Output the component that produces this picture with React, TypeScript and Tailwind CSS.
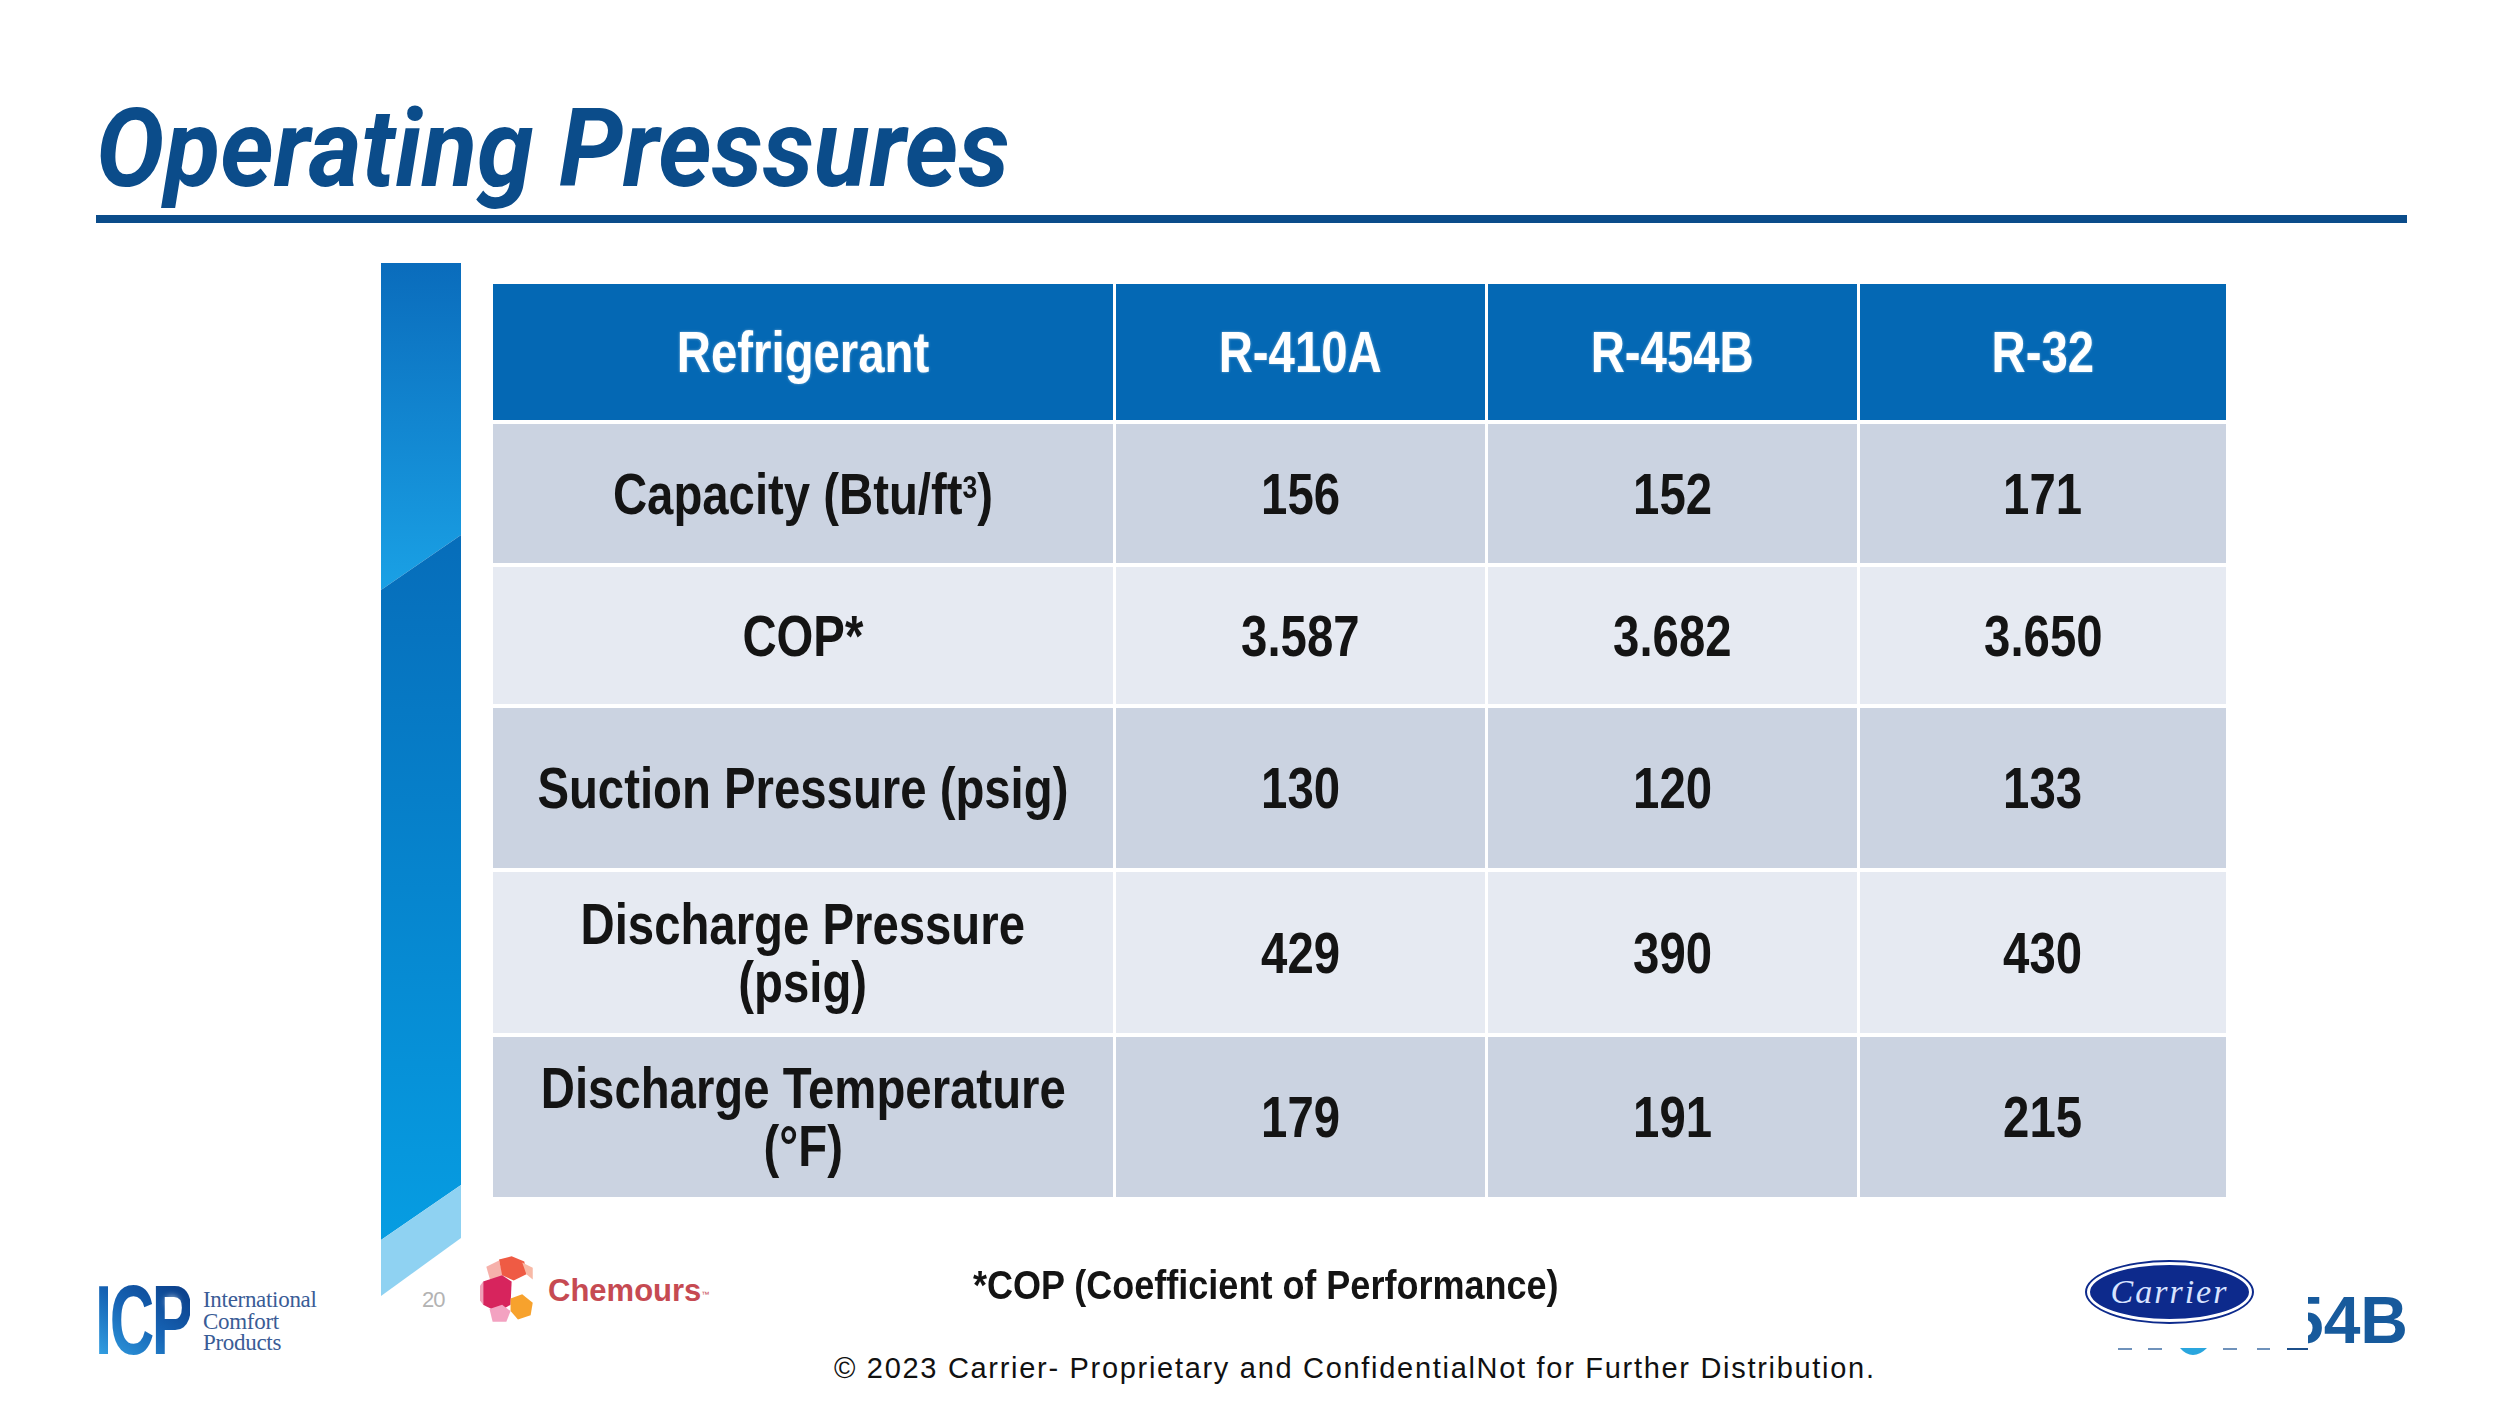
import React from "react";

type Row = {
    label: React.ReactNode;
    values: string[];
    shade: "dark" | "light";
};

const rows: Row[] = [
    { label: <>Capacity (Btu/ft<sup className="text-[32px]">3</sup>)</>, values: ["156", "152", "171"], shade: "dark" },
    { label: "COP*", values: ["3.587", "3.682", "3.650"], shade: "light" },
    { label: "Suction Pressure (psig)", values: ["130", "120", "133"], shade: "dark" },
    { label: <>Discharge Pressure<br />(psig)</>, values: ["429", "390", "430"], shade: "light" },
    { label: <>Discharge Temperature<br />(°F)</>, values: ["179", "191", "215"], shade: "dark" },
];

const headers = ["Refrigerant", "R-410A", "R-454B", "R-32"];

function Cell({ children, className }: { children: React.ReactNode; className: string }) {
    return (
        <div className={"flex items-center justify-center text-center " + className}>
            <span className="inline-block whitespace-nowrap scale-x-[0.83] leading-[58px]">{children}</span>
        </div>
    );
}

function SideBar() {
    return (
        <svg width="80" height="1033" viewBox="0 0 80 1033" className="block">
            <defs>
                <linearGradient id="barTop" x1="0" y1="0" x2="0" y2="1">
                    <stop offset="0" stopColor="#0a6cbc" />
                    <stop offset="1" stopColor="#1aa1e5" />
                </linearGradient>
                <linearGradient id="barMid" x1="0" y1="0" x2="0" y2="1">
                    <stop offset="0" stopColor="#066dba" />
                    <stop offset="1" stopColor="#069de2" />
                </linearGradient>
            </defs>
            <polygon points="0,0 80,0 80,272 0,327" fill="url(#barTop)" />
            <polygon points="0,327 80,272 80,922 0,977" fill="url(#barMid)" />
            <polygon points="0,977 80,922 80,975 0,1033" fill="#8fd2f2" />
        </svg>
    );
}

function IcpLogo() {
    return (
        <div className="flex items-start">
            <div className="relative w-[108px] h-[70px]">
                <span className="inline-block origin-left scale-x-[0.63] text-[98px] leading-[70px] font-bold font-['Liberation_Sans',sans-serif] tracking-[-4px] bg-linear-to-tr from-[#34a2e4] via-[#1663b4] to-[#0b3c86] bg-clip-text text-transparent">
                    ICP
                </span>
                <div className="absolute left-[74px] top-[14px] w-[6px] h-[6px] rounded-full bg-white shadow-[0_0_6px_3px_rgba(255,255,255,0.7)]" />
            </div>
            <div className="mt-[4px] font-['Liberation_Serif',serif] text-[23px] leading-[21.5px] text-[#3a5c96] tracking-[-0.3px]">
                <div>International</div>
                <div>Comfort</div>
                <div>Products</div>
            </div>
        </div>
    );
}

function ChemoursLogo() {
    return (
        <div className="flex items-center">
            <svg width="58" height="68" viewBox="0 0 55 64">
                <polygon points="6,10 18,4 22,18 10,24" fill="#f6b1ab" />
                <polygon points="18,3 30,0 42,5 44,17 32,23 21,18" fill="#ef5b44" />
                <polygon points="40,6 50,11 50,22 44,17" fill="#f8b9a6" />
                <polygon points="3,24 21,18 30,24 29,46 17,53 3,46" fill="#d7245d" />
                <polygon points="29,40 40,36 50,44 48,56 36,60 29,52" fill="#f7a22d" />
                <polygon points="9,50 21,46 29,52 25,62 12,62" fill="#f3a2c1" />
                <polygon points="0,28 3,24 3,46 0,42" fill="#f0a0b8" />
            </svg>
            <span className="ml-[10px] text-[31px] leading-none font-bold font-['Liberation_Sans',sans-serif] text-[#c64a52]">
                Chemours
                <sup className="text-[8px] font-normal">™</sup>
            </span>
        </div>
    );
}

function CarrierLogo() {
    return (
        <div className="flex flex-col">
            <div className="flex items-start h-[60px]">
                <div className="w-[165px] h-[60px] rounded-[50%] bg-[#0d2a8c] border-[3px] border-white outline-[2px] outline-solid outline-[#0d2a8c] flex items-center justify-center">
                    <span className="font-['Liberation_Serif',serif] italic text-[34px] leading-none tracking-[2px] text-[#d8e3ff]">
                        Carrier
                    </span>
                </div>
                <div className="mt-[25px] ml-[56px] w-[100px] overflow-hidden flex justify-end">
                    <span className="whitespace-nowrap text-[66px] leading-[66px] font-bold font-['Liberation_Sans',sans-serif] text-[#175a9c]">
                        454B
                    </span>
                </div>
            </div>
            <svg width="225" height="8" viewBox="0 0 225 8" className="mt-[26px] block">
                <g fill="#6f92bb">
                    <rect x="31" y="0" width="14" height="2" />
                    <rect x="61" y="0" width="14" height="2" />
                    <rect x="136" y="0" width="14" height="2" />
                    <rect x="170" y="0" width="13" height="2" />
                </g>
                <rect x="200" y="0" width="21" height="2" fill="#1c4f8a" />
                <path d="M93 0 H120 Q113 7 106 7 Q99 7 93 0 Z" fill="#2aa6de" />
            </svg>
        </div>
    );
}

export default function App() {
    return (
        <div className="w-[2500px] h-[1406px] bg-white flex flex-col overflow-hidden">
            {/* Title */}
            <div className="pt-[94px] pl-[96px] h-[204px]">
                <h1 className="inline-block origin-left scale-x-[0.93] whitespace-nowrap font-['Roboto',sans-serif] italic font-bold text-[110px] leading-[110px] text-[#0b4c8a]">
                    Operating Pressures
                </h1>
            </div>
            <div className="mt-[11px] ml-[96px] w-[2311px] h-[8px] bg-[#0b4c8a]" />

            {/* Body */}
            <div className="mt-[40px] flex flex-1">
                <div className="w-[381px] pl-[95px] pt-[1022px]">
                    <IcpLogo />
                </div>

                <div className="w-[80px] flex flex-col">
                    <SideBar />
                    <div className="-mt-[7px] ml-[41px] text-[22px] leading-[22px] text-[#b3b3b3] font-['Liberation_Sans',sans-serif] tracking-[-1px]">
                        20
                    </div>
                </div>

                <div className="flex-1 flex flex-col pt-[21px]">
                    <div className="ml-[32px] grid grid-cols-[620px_369px_369px_366px] grid-rows-[136px_139px_137px_160px_161px_160px] gap-x-[3px] gap-y-[4px] font-['Liberation_Sans',Arial,sans-serif] font-bold text-[57px] text-[#141414]">
                        {headers.map((h) => (
                            <Cell key={h} className="bg-[#0468b4] text-white [text-shadow:0_0_3px_rgba(255,255,255,0.45)]">
                                {h}
                            </Cell>
                        ))}
                        {rows.map((r, i) => {
                            const bg = r.shade === "dark" ? "bg-[#cbd3e1]" : "bg-[#e6eaf2]";
                            return (
                                <React.Fragment key={i}>
                                    <Cell className={bg}>{r.label}</Cell>
                                    {r.values.map((v, j) => (
                                        <Cell key={j} className={bg}>{v}</Cell>
                                    ))}
                                </React.Fragment>
                            );
                        })}
                    </div>

                    {/* Footer logos + footnote */}
                    <div className="mt-[53px] h-[100px] flex items-start">
                        <div className="ml-[19px] mt-[6px] w-[230px]">
                            <ChemoursLogo />
                        </div>
                        <div className="ml-[263px] mt-[15px] w-[600px]">
                            <span className="inline-block origin-left scale-x-[0.9] whitespace-nowrap font-['Liberation_Sans',Arial,sans-serif] font-bold text-[40px] leading-[40px] text-[#141414]">
                                *COP (Coefficient of Performance)
                            </span>
                        </div>
                        <div className="ml-[514px] mt-[12px]">
                            <CarrierLogo />
                        </div>
                    </div>

                    <div className="mt-[4px] ml-[373px] whitespace-nowrap font-['Liberation_Sans',Arial,sans-serif] text-[29px] leading-[29px] tracking-[1.7px] text-[#111]">
                        © 2023 Carrier- Proprietary and ConfidentialNot for Further Distribution.
                    </div>
                </div>
            </div>
        </div>
    );
}
